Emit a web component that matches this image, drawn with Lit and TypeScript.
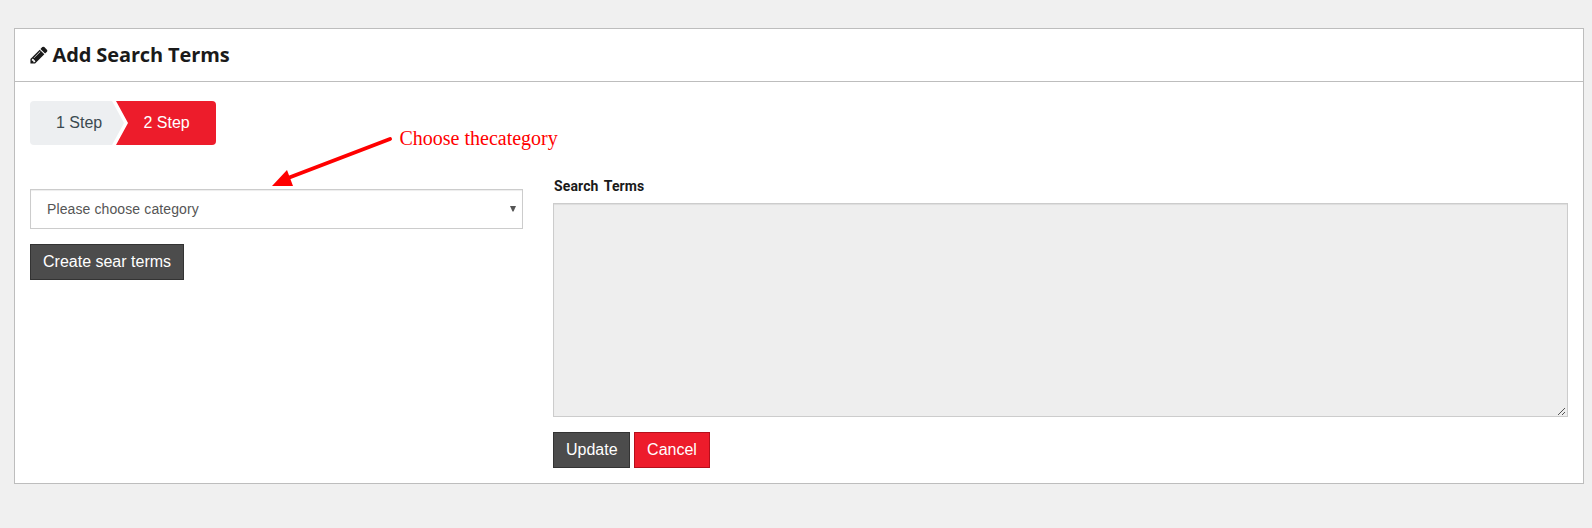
import { LitElement, html, css } from "lit";
import { customElement } from "lit/decorators.js";

@customElement("app-root")
export class AppRoot extends LitElement {
  static styles = css`
    :host {
      display: block;
      box-sizing: border-box;
      height: 528px;
      padding: 28px 8px 44px 14px;
      background: #f0f0f0;
      position: relative;
      font-family: "Liberation Sans", Arial, sans-serif;
      color: #1a1a1a;
    }
    * { box-sizing: border-box; }
    .panel { height: 456px; border: 1px solid #bdbdbd; background: #fff; }
    .head {
      height: 53px;
      padding: 0 15px;
      border-bottom: 1px solid #bdbdbd;
      display: flex;
      align-items: center;
    }
    .head svg { width: 20px; height: 20px; margin: 0 4px 0 -1.5px; fill: #1a1a1a; flex: none; }
    h1 {
      margin: 0;
      font: 700 20px/28px "Open Sans", sans-serif;
      letter-spacing: -.12px;
      white-space: nowrap;
    }
    .body { padding: 19px 15px 0; }
    .steps { display: flex; width: 186px; height: 44px; border-radius: 4px; overflow: hidden; font-size: 16px; line-height: 44px; }
    .step { white-space: nowrap; }
    .first { width: 94px; padding-left: 26px; background: #edeff1; color: #3b4a50; clip-path: polygon(0 0, 82px 0, 94px 50%, 82px 100%, 0 100%); }
    .second { width: 100px; margin-left: -8px; padding-left: 27.5px; background: #ed1c2b; color: #fff; clip-path: polygon(0 0, 100% 0, 100% 100%, 0 100%, 12px 50%); }
    .columns { display: grid; grid-template-columns: 493px 1015px; column-gap: 30px; padding-top: 32px; }
    .left { padding-top: 12px; }
    .select {
      height: 40px;
      border: 1px solid #ccc;
      box-shadow: inset 0 1px 1px rgba(0, 0, 0, .075);
      padding: 0 6px 0 16px;
      display: flex;
      align-items: center;
      justify-content: space-between;
      font-size: 14px;
      letter-spacing: .11px;
      color: #555;
      margin-bottom: 15px;
    }
    .select svg { width: 6px; height: 6px; fill: #555; }
    .btn {
      display: block;
      height: 36px;
      padding: 0 12px;
      border: 1px solid #333;
      background: #4c4c4c;
      color: #fff;
      font: 16px/34px "Liberation Sans", Arial, sans-serif;
      text-align: center;
      white-space: nowrap;
    }
    .create { width: 154px; }
    .update { width: 77px; }
    .cancel { width: 76px; background: #ed1c2b; border-color: #b50f1b; }
    .label { font: 700 14px/18px Roboto, sans-serif; height: 26px; padding-left: 1px; letter-spacing: .12px; word-spacing: 2px; white-space: nowrap; display: block; }
    .area {
      height: 214px;
      border: 1px solid #ccc;
      background: #eee;
      box-shadow: inset 0 1px 1px rgba(0, 0, 0, .075);
      display: flex;
      align-items: flex-end;
      justify-content: flex-end;
      padding: 1px 1px 0;
    }
    .area svg { width: 9px; height: 9px; }
    .actions { display: flex; gap: 4px; margin-top: 15px; }
    .arrow { position: absolute; left: 265px; top: 130px; width: 135px; height: 62px; }
    .note {
      position: absolute;
      left: 399.5px;
      top: 126px;
      font: 20px/24px "Liberation Serif", serif;
      color: #f00;
      white-space: nowrap;
    }
  `;

  render() {
    return html`
      <section class="panel">
        <header class="head">
          <svg viewBox="0 0 1792 1792"><path d="M491 1536l91-91-235-235-91 91v107h128v128h107zM1014 608q0-22-22-22-10 0-17 7l-542 542q-7 7-7 17 0 22 22 22 10 0 17-7l542-542q7-7 7-17zM960 416l416 416-832 832h-416v-416zM1643 512q0 53-37 90l-166 166-416-416 166-165q36-38 90-38 53 0 91 38l235 234q37 39 37 91z"/></svg>
          <h1>Add Search Terms</h1>
        </header>
        <div class="body">
          <nav class="steps">
            <div class="step first">1 Step</div>
            <div class="step second">2 Step</div>
          </nav>
          <div class="columns">
            <div class="left">
              <div class="select" role="combobox">
                <span>Please choose category</span>
                <svg viewBox="0 0 6 6"><path d="M0 0H6L3.5 5.5H2.5Z"/></svg>
              </div>
              <button class="btn create">Create sear terms</button>
            </div>
            <div>
              <label class="label">Search Terms</label>
              <div class="area" role="textbox">
                <svg viewBox="0 0 9 9" fill="none" stroke="#555"><path d="M1 8L8 1M5 8L8 5"/></svg>
              </div>
              <div class="actions">
                <button class="btn update">Update</button>
                <button class="btn cancel">Cancel</button>
              </div>
            </div>
          </div>
        </div>
      </section>
      <svg class="arrow" viewBox="265 130 135 62">
        <path d="M390 139L288 178" stroke="#f00" stroke-width="4" stroke-linecap="round"/>
        <path d="M272 186L287 170L293 186Z" fill="#f00"/>
      </svg>
      <span class="note">Choose thecategory</span>
    `;
  }
}
